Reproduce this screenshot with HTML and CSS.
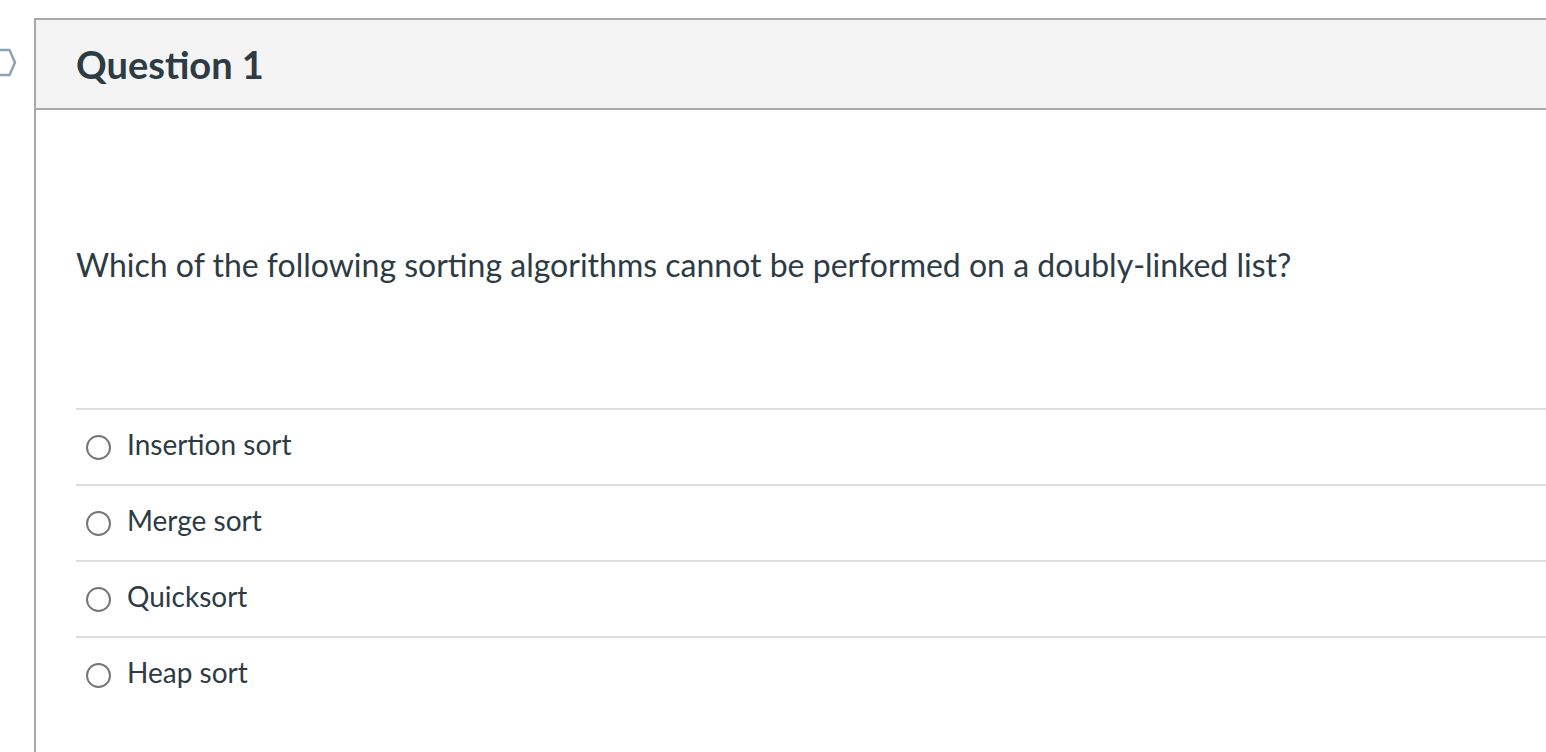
FILE: index.html
```html
<!DOCTYPE html>
<html>
<head>
<meta charset="utf-8">
<link rel="stylesheet" href="styles.css">
</head>
<body>
<div class="page">
  <svg class="flag" width="20" height="30" viewBox="0 0 20 30">
    <path d="M-6 2 H9.5 L15 14.5 L9.5 27 H-6" fill="none" stroke="#8ca2b6" stroke-width="2.5" stroke-linejoin="round"/>
  </svg>
  <div class="question">
    <div class="header"><h2 class="title">Question 1</h2></div>
    <div class="body">
      <p class="text">Which of the following sorting algorithms cannot be performed on a doubly-linked list?</p>
      <div class="answers">
        <label class="answer"><span class="radio"></span><span class="label">Insertion sort</span></label>
        <label class="answer"><span class="radio"></span><span class="label">Merge sort</span></label>
        <label class="answer"><span class="radio"></span><span class="label">Quicksort</span></label>
        <label class="answer"><span class="radio"></span><span class="label">Heap sort</span></label>
      </div>
    </div>
  </div>
</div>
</body>
</html>
```
FILE: styles.css
```css
html, body {
  margin: 0;
  padding: 0;
  background: #fff;
  overflow: hidden;
}
body {
  font-family: Lato, "Liberation Sans", sans-serif;
  color: #2d3b45;
  width: 1546px;
  height: 752px;
}
.page {
  position: relative;
  padding: 18px 0 0 34px;
  height: 734px;
  overflow: hidden;
}
.flag {
  position: absolute;
  left: 0;
  top: 48px;
}
.question {
  width: 1600px;
  border: 2px solid #a8a8a8;
  border-bottom: none;
  height: 760px;
}
.header {
  height: 88px;
  background: #f4f4f4;
  border-bottom: 2px solid #a8a8a8;
  display: flex;
  align-items: center;
  padding-left: 40px;
}
.title {
  margin: 0;
  font-size: 38px;
  font-weight: 700;
  line-height: 1;
}
.body {
  padding: 0 0 0 40px;
}
.text {
  margin: 0;
  padding: 136px 0 0 0;
  height: 162px;
  font-size: 32px;
  line-height: 38px;
}
.answers {
  display: flex;
  flex-direction: column;
}
.answer {
  display: flex;
  align-items: center;
  height: 74px;
  border-top: 2px solid #dddddd;
  font-size: 28px;
}
.radio {
  width: 21px;
  height: 21px;
  border: 2px solid #757575;
  border-radius: 50%;
  margin-left: 10px;
  margin-right: 16px;
}
.label {
  line-height: 1;
  padding-bottom: 7px;
}
```
